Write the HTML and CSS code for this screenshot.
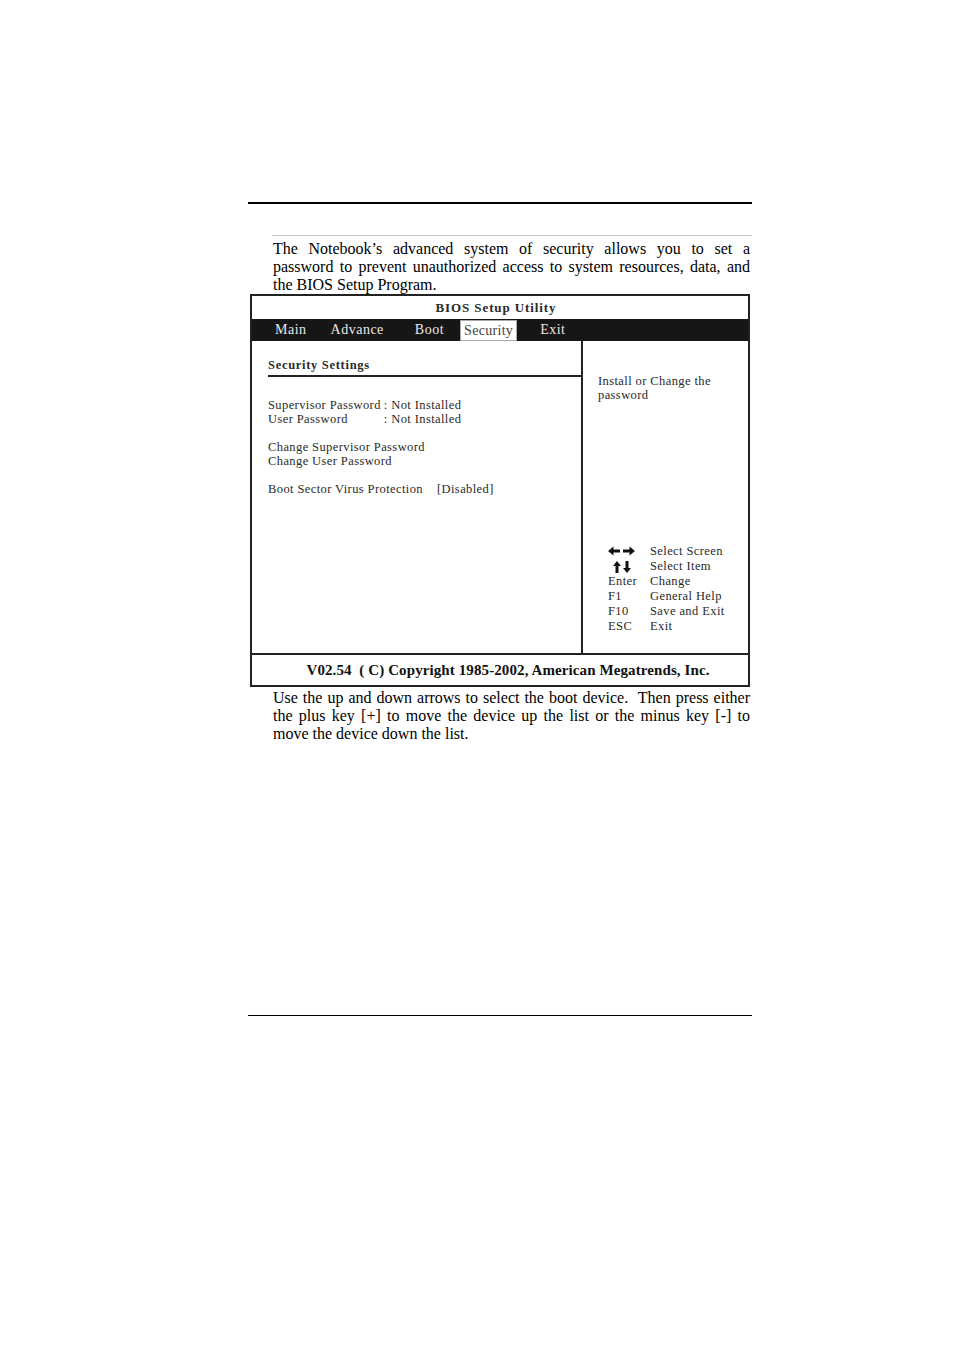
FILE: index.html
```html
<!DOCTYPE html>
<html>
<head>
<meta charset="utf-8">
<link rel="stylesheet" href="styles.css">
</head>
<body>
<div class="page">
  <div class="top-rule"></div>
  <div class="sub-rule"></div>
  <div class="para intro">
    <div class="jline">The Notebook’s advanced system of security allows you to set a</div>
    <div class="jline">password to prevent unauthorized access to system resources, data, and</div>
    <div>the BIOS Setup Program.</div>
  </div>
  <div class="bios">
    <div class="bios-title">BIOS Setup Utility</div>
    <div class="menu">
      <span class="tab t-main">Main</span>
      <span class="tab t-adv">Advance</span>
      <span class="tab t-boot">Boot</span>
      <span class="tab t-sec active">Security</span>
      <span class="tab t-exit">Exit</span>
    </div>
    <div class="content">
      <div class="left">
        <div class="heading">Security Settings</div>
        <div class="grp pw">
          <span>Supervisor Password</span><span>: Not Installed</span>
          <span>User Password</span><span>: Not Installed</span>
        </div>
        <div class="grp">
          <div>Change Supervisor Password</div>
          <div>Change User Password</div>
        </div>
        <div class="grp virus">
          <span>Boot Sector Virus Protection</span><span>[Disabled]</span>
        </div>
      </div>
      <div class="right">
        <div class="help">Install or Change the<br>password</div>
        <div class="keys">
          <span class="k"><svg width="28" height="10" viewBox="0 0 28 10"><path d="M0 5 L5.5 0.5 L5.5 3.5 L12 3.5 L12 6.5 L5.5 6.5 L5.5 9.5 Z" fill="#111"/><path d="M27 5 L21.5 0.5 L21.5 3.5 L15 3.5 L15 6.5 L21.5 6.5 L21.5 9.5 Z" fill="#111"/></svg></span><span>Select Screen</span>
          <span class="k"><svg width="28" height="12" viewBox="0 0 28 12"><path d="M9 0 L13 5 L10.5 5 L10.5 12 L7.5 12 L7.5 5 L5 5 Z" fill="#111"/><path d="M19 12 L15 7 L17.5 7 L17.5 0 L20.5 0 L20.5 7 L23 7 Z" fill="#111"/></svg></span><span>Select Item</span>
          <span class="k">Enter</span><span>Change</span>
          <span class="k">F1</span><span>General Help</span>
          <span class="k">F10</span><span>Save and Exit</span>
          <span class="k">ESC</span><span>Exit</span>
        </div>
      </div>
    </div>
    <div class="footer">V02.54&nbsp; ( C) Copyright 1985-2002, American Megatrends, Inc.</div>
  </div>
  <p class="para outro">Use the up and down arrows to select the boot device.&nbsp; Then press either the plus key [+] to move the device up the list or the minus key [-] to move the device down the list.</p>
  <div class="bottom-rule"></div>
</div>
</body>
</html>
```
FILE: styles.css
```css
html, body {
  margin: 0;
  padding: 0;
  background: #fff;
}
body {
  font-family: "Liberation Serif", "Times New Roman", serif;
  color: #000;
}
.page {
  margin-left: 248px;
  width: 504px;
  padding-top: 202px;
}
.top-rule {
  height: 2px;
  background: #000;
}
.sub-rule {
  margin: 31px 0 0 24px;
  height: 1px;
  background: #c8c8c8;
}
.para {
  margin: 0 2px 0 25px;
  font-size: 16px;
  line-height: 18px;
  text-align: justify;
}
.jline {
  text-align: justify;
  text-align-last: justify;
  white-space: nowrap;
}
.intro {
  margin-top: 4px;
}
.bios {
  margin-left: 2px;
  width: 496px;
  border: 2px solid #222;
  color: #2a2a2a;
  font-size: 12.5px;
  letter-spacing: 0.4px;
}
.bios-title {
  height: 23px;
  line-height: 24px;
  text-align: center;
  font-weight: bold;
  font-size: 13px;
  letter-spacing: 0.9px;
  padding-right: 8px;
}
.menu {
  height: 22px;
  background: #161616;
  display: flex;
  align-items: center;
  font-size: 14px;
  letter-spacing: 0.5px;
  color: #e8e8e8;
}
.tab {
  line-height: 20px;
}
.t-main { margin-left: 23px; }
.t-adv { margin-left: 24px; }
.t-boot { margin-left: 31px; }
.t-sec {
  margin-left: 16px;
  background: #fff;
  color: #444;
  padding: 0 3px 0 3px;
  border: 1px solid #aaa;
  height: 19px;
  letter-spacing: 0.3px;
}
.t-exit { margin-left: 23px; }
.content {
  display: flex;
  height: 312px;
  border-bottom: 2px solid #222;
}
.left {
  width: 313px;
  padding-left: 16px;
  border-right: 2px solid #222;
  line-height: 14px;
}
.heading {
  margin-top: 17px;
  padding-bottom: 3px;
  border-bottom: 2px solid #222;
  font-weight: bold;
  font-size: 12.5px;
  letter-spacing: 0.7px;
}
.grp {
  margin-top: 14px;
}
.pw {
  margin-top: 21px;
  display: grid;
  grid-template-columns: max-content 1fr;
  column-gap: 3px;
}
.virus {
  display: flex;
  gap: 14px;
}
.right {
  flex: 1;
  padding-left: 15px;
  line-height: 14px;
}
.help {
  margin-top: 33px;
}
.keys {
  margin-top: 142px;
  margin-left: 10px;
  display: grid;
  grid-template-columns: 42px 1fr;
  line-height: 15px;
}
.k svg {
  display: block;
  margin-top: 2px;
}
.footer {
  height: 30px;
  line-height: 31px;
  text-align: center;
  font-weight: bold;
  font-size: 15px;
  letter-spacing: 0.1px;
  padding-left: 16px;
  color: #111;
}
.outro {
  margin-top: 2px;
}
.bottom-rule {
  margin-top: 272px;
  height: 1px;
  background: #000;
}
```
